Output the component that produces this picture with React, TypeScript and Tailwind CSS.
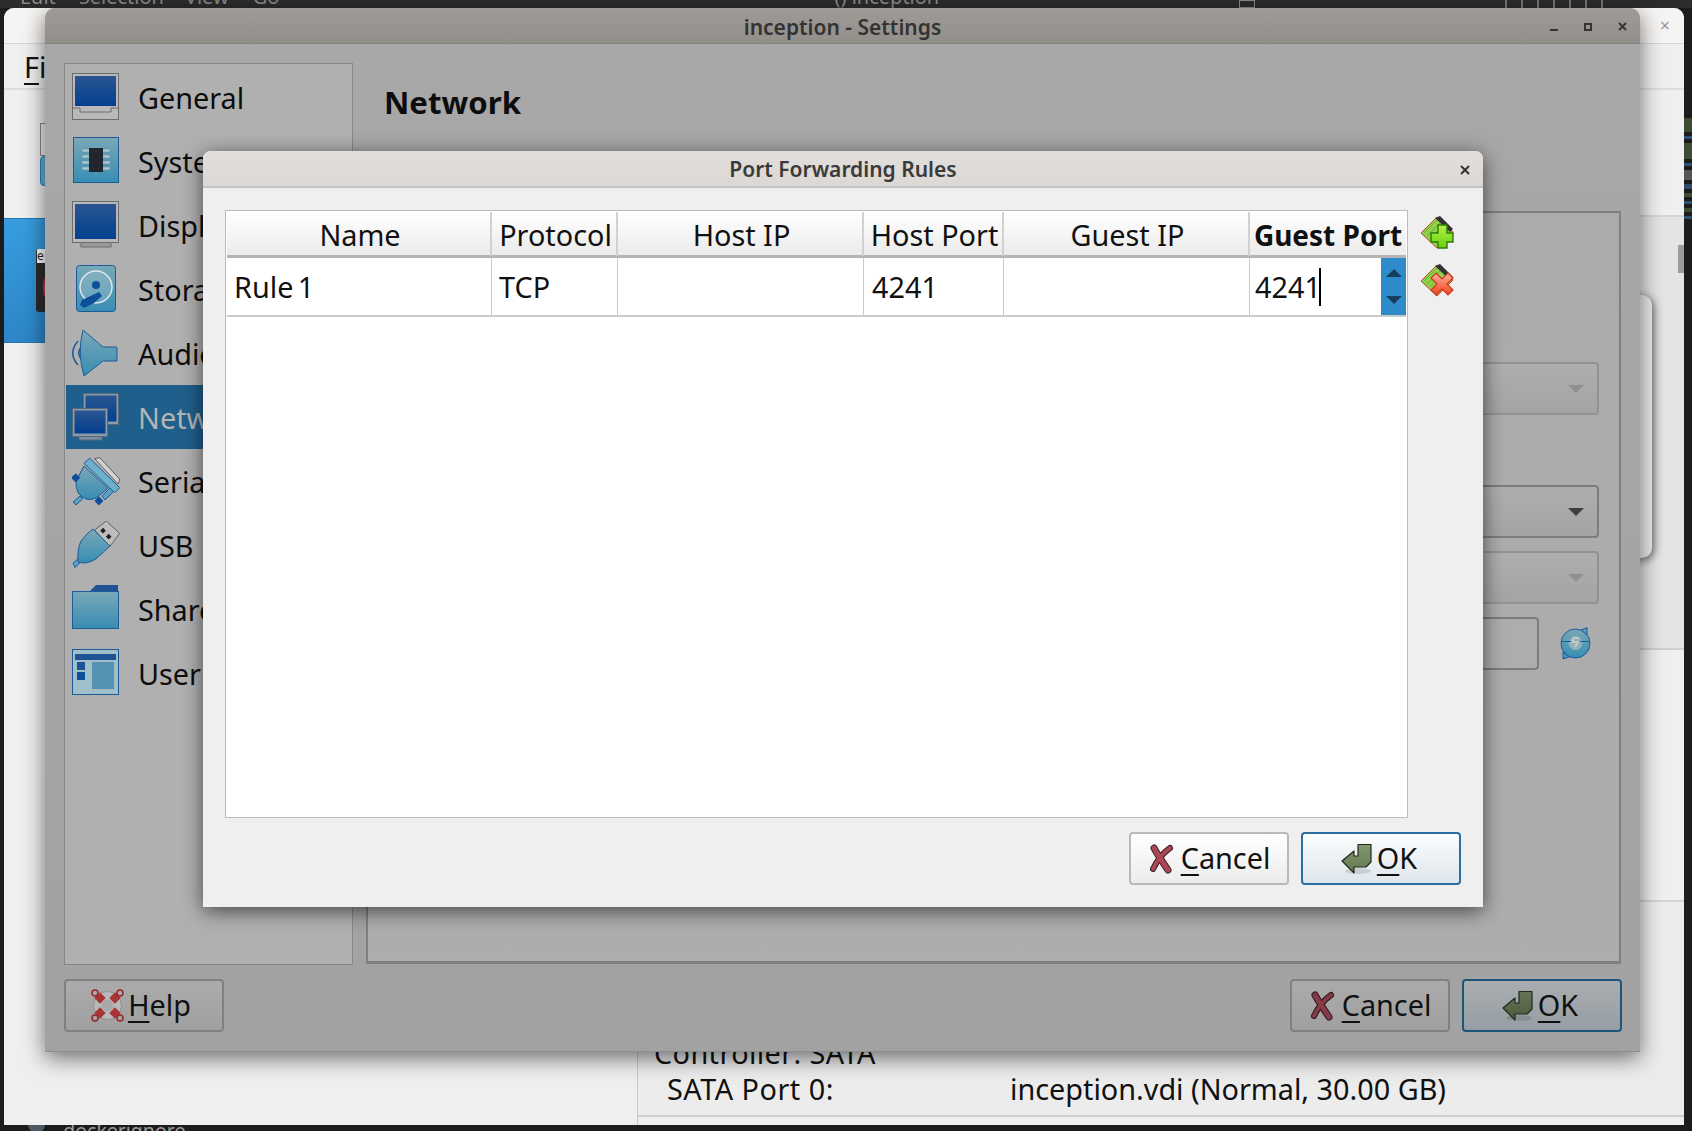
const COLS = "grid grid-cols-[265px_126px_246px_140px_246px_156px]";

const SIDEBAR = ["General", "System", "Display", "Storage", "Audio", "Network", "Serial Ports", "USB", "Shared Folders", "User Interface"];

function Defs() {
  return (
    <svg className="absolute w-0 h-0">
      <defs>
        <linearGradient id="scr" x1="0" y1="0" x2="0" y2="1">
          <stop offset="0" stopColor="#2a5590" />
          <stop offset="1" stopColor="#03408f" />
        </linearGradient>
        <linearGradient id="teal" x1="0" y1="0" x2="0" y2="1">
          <stop offset="0" stopColor="#7aa8b6" />
          <stop offset="1" stopColor="#378db3" />
        </linearGradient>
        <linearGradient id="plus" x1="0" y1="0" x2="0" y2="1">
          <stop offset="0" stopColor="#b4f04a" />
          <stop offset="1" stopColor="#66d20e" />
        </linearGradient>
        <linearGradient id="del" x1="0" y1="0" x2="0" y2="1">
          <stop offset="0" stopColor="#ffb09a" />
          <stop offset="1" stopColor="#f0441c" />
        </linearGradient>
        <linearGradient id="okA" x1="0" y1="0" x2="0" y2="1">
          <stop offset="0" stopColor="#84986f" />
          <stop offset="1" stopColor="#637850" />
        </linearGradient>
        <linearGradient id="okB" x1="0" y1="0" x2="0" y2="1">
          <stop offset="0" stopColor="#667558" />
          <stop offset="1" stopColor="#4c5a3e" />
        </linearGradient>
      </defs>
    </svg>
  );
}

function SideIcon({ name }: { name: string }) {
  const line = "#1c5a9c";
  if (name === "General")
    return (
      <svg width="48" height="48" viewBox="0 0 48 48">
        <rect x="0.5" y="0.5" width="46" height="46" fill="#b9b9b9" stroke="#6c6c6c" />
        <rect x="3" y="3" width="41" height="30" fill="url(#scr)" />
        <path d="M1 35H8V39H39V35H46" fill="none" stroke="#6c6c6c" />
      </svg>
    );
  if (name === "System")
    return (
      <svg width="48" height="48" viewBox="0 0 48 48">
        <rect x="1.5" y="0.5" width="45" height="45" fill="url(#teal)" stroke={line} />
        {[12, 18, 24, 30].map((y) => (
          <rect key={y} x="10" y={y} width="28" height="3" fill="#a9c6cf" stroke="#5b8a9c" strokeWidth="0.5" />
        ))}
        <rect x="17" y="11" width="14" height="24" fill="#22262e" />
      </svg>
    );
  if (name === "Display")
    return (
      <svg width="48" height="48" viewBox="0 0 48 48">
        <path d="M9 41V46H39V41" fill="#9a9a9a" stroke="#6c6c6c" />
        <rect x="0.5" y="0.5" width="46" height="41" fill="#b9b9b9" stroke="#6c6c6c" />
        <rect x="3" y="3" width="41" height="35" fill="url(#scr)" />
      </svg>
    );
  if (name === "Storage")
    return (
      <svg width="48" height="48" viewBox="0 0 48 48">
        <rect x="4.5" y="0.5" width="39" height="46" rx="3" fill="url(#teal)" stroke={line} />
        <circle cx="24" cy="22" r="16" fill="#a8c6d0" fillOpacity="0.35" stroke="#dfe8ea" strokeWidth="1.5" />
        <circle cx="24" cy="20" r="4" fill="#0e4f9c" />
        <path d="M8 40L10 35L27 27L30 31L22 38L12 43Z" fill="#0e4f9c" />
      </svg>
    );
  if (name === "Audio")
    return (
      <svg width="48" height="48" viewBox="0 0 48 48">
        <path d="M6 12C-1 20 -1 28 6 36" fill="none" stroke="#1c5a9c" strokeWidth="1.5" />
        <path d="M9 18C6 22 6 26 9 30" fill="none" stroke="#1c5a9c" strokeWidth="1.5" />
        <path d="M11 1L31 18H44Q45 18 45 19V32H31L12 47Q5 24 11 1Z" fill="url(#teal)" stroke={line} strokeLinejoin="round" />
        <path d="M31 18V32" stroke="#5c93ab" />
      </svg>
    );
  if (name === "Network")
    return (
      <svg width="48" height="48" viewBox="0 0 48 48">
        <rect x="11.5" y="0.5" width="35" height="31" fill="#8a9aa8" stroke="#56687a" />
        <rect x="13.5" y="2.5" width="31" height="26" fill="url(#scr)" />
        <rect x="0.5" y="15.5" width="35" height="28" fill="#8a9aa8" stroke="#56687a" />
        <rect x="2.5" y="17.5" width="31" height="23" fill="url(#scr)" />
        <path d="M7 44V47H30V44" fill="#7b8c9c" stroke="#56687a" />
      </svg>
    );
  if (name === "Serial Ports")
    return (
      <svg width="48" height="48" viewBox="0 0 48 48">
        <path d="M22.7 1.7L27.7 0.7L47.7 22L46 27Z" fill="#d2d2d2" stroke="#5f5f5f" />
        <path d="M1 45L8 39L10.5 42L4 48Z" fill="#5aa3c0" stroke={line} />
        <path d="M12 9L4 24Q3 38 14 42Q22 44 28 38L36 31Z" fill="url(#teal)" stroke={line} />
        <path d="M30 39L40 29L43 33L33 43Z" fill="#5aa3c0" stroke={line} />
        <rect x="0.5" y="17.5" width="6.5" height="6.5" rx="1" fill="#0e4f9c" transform="rotate(45 3.7 20.7)" />
        <rect x="23.5" y="40.5" width="6.5" height="6.5" rx="1" fill="#0e4f9c" transform="rotate(45 26.7 44)" />
        <path d="M17.7 1.3L47.7 30.7L42.7 35.7L12 6.3Z" fill="#6db0ca" stroke={line} strokeLinejoin="round" />
      </svg>
    );
  if (name === "USB")
    return (
      <svg width="48" height="48" viewBox="0 0 48 48">
        <path d="M34.3 0L47.7 12.3L37.7 25.7L22.7 9Z" fill="#bdbdbd" stroke="#5f5f5f" />
        <rect x="29" y="7.7" width="4" height="4" fill="#222" transform="rotate(45 31 9.7)" />
        <rect x="34.7" y="13.7" width="4" height="4" fill="#222" transform="rotate(45 36.7 15.7)" />
        <path d="M1 42L6 38L8.5 41L3 46.7Z" fill="#5aa3c0" stroke={line} />
        <path d="M21 8L38 25L24 38Q14 44 6 41Q5 28 9 20Q14 13 21 8Z" fill="url(#teal)" stroke={line} />
      </svg>
    );
  if (name === "Shared Folders")
    return (
      <svg width="48" height="48" viewBox="0 0 48 48">
        <path d="M18 6L24 0H46V8H18Z" fill="#1f5394" />
        <rect x="0.5" y="6.5" width="46" height="37" fill="url(#teal)" stroke={line} />
      </svg>
    );
  return (
    <svg width="48" height="48" viewBox="0 0 48 48">
      <rect x="0.5" y="0.5" width="46" height="45" fill="#9fbfc9" stroke={line} />
      <rect x="3" y="5" width="41" height="6" fill="#1f5394" />
      <rect x="5" y="13" width="8" height="8" fill="#1f5394" />
      <rect x="5" y="23" width="8" height="8" fill="#0e4f9c" />
      <rect x="20" y="13" width="22" height="27" fill="#5592b2" />
    </svg>
  );
}

function CancelIcon({ dim }: { dim?: boolean }) {
  const fill = dim ? "#863a48" : "#ad4555";
  const edge = dim ? "#2a1a1c" : "#3a2428";
  return (
    <svg width="26" height="30" viewBox="0 0 26 30">
      <path d="M6 4Q11 13 20 26" fill="none" stroke={edge} strokeWidth="7" strokeLinecap="round" />
      <path d="M22 4Q11 12 5 25" fill="none" stroke={edge} strokeWidth="6" strokeLinecap="round" />
      <path d="M6 4Q11 13 20 26" fill="none" stroke={fill} strokeWidth="5" strokeLinecap="round" />
      <path d="M22 4Q11 12 5 25" fill="none" stroke={fill} strokeWidth="4" strokeLinecap="round" />
    </svg>
  );
}

function OkIcon({ dim }: { dim?: boolean }) {
  return (
    <svg width="31" height="32" viewBox="0 0 31 32">
      <ellipse cx="17" cy="28" rx="13" ry="3" fill="#000" fillOpacity="0.12" />
      <path d="M17 1.5H30V19L25 24H13V30L1 18L13 8V13H17Z" fill={dim ? "url(#okB)" : "url(#okA)"} stroke="#1f2a1a" strokeWidth="1.2" strokeLinejoin="round" />
    </svg>
  );
}

function HelpIcon() {
  return (
    <svg width="33" height="33" viewBox="0 0 33 33">
      <circle cx="16.5" cy="16.5" r="14" fill="#b9b9b9" stroke="#8f8f8f" />
      <circle cx="16.5" cy="16.5" r="6" fill="#a8a8a8" />
      {[
        [9, 9, 45],
        [24, 9, -45],
        [9, 24, -45],
        [24, 24, 45],
      ].map(([x, y, r]) => (
        <rect key={`${x}-${y}`} x={x - 4} y={y - 4} width="8" height="8" fill="#a83436" transform={`rotate(${r} ${x} ${y})`} />
      ))}
      {[
        [4, 4],
        [29, 4],
        [4, 29],
        [29, 29],
      ].map(([x, y]) => (
        <circle key={`${x}-${y}`} cx={x} cy={y} r="3" fill="none" stroke="#9a2426" strokeWidth="1.5" />
      ))}
    </svg>
  );
}

function Arrow({ color }: { color: string }) {
  return (
    <svg width="16" height="8" viewBox="0 0 16 8">
      <path d="M0 0H16L8 8Z" fill={color} />
    </svg>
  );
}

function Combo({ arrow, dim }: { arrow: string; dim?: boolean }) {
  return (
    <div className={`h-[53px] flex items-center justify-end pr-[13px] rounded-[4px] border-2 bg-gradient-to-b from-[#aeaeae] to-[#a4a4a4] ${dim ? "border-[#929292]" : "border-[#7c7c7c]"}`}>
      <Arrow color={arrow} />
    </div>
  );
}

function DlgButton({ kind, dim }: { kind: "cancel" | "ok"; dim?: boolean }) {
  const skin =
    kind === "ok"
      ? dim
        ? "pr-[4px] border-[#1d5578] from-[#a9adaf] to-[#969ea4]"
        : "pr-[4px] border-[#2a6f9f] from-[#fbfcfd] to-[#dfe6ec]"
      : dim
        ? "border-[#808080] from-[#ababab] to-[#a0a0a0]"
        : "border-[#b9b9b9] from-[#ffffff] to-[#ececec]";
  return (
    <button className={`w-[160px] h-[53px] flex items-center justify-center gap-[7px] rounded-[4px] border-2 bg-gradient-to-b text-[28.8px] leading-none text-[#111] ${skin}`}>
      {kind === "cancel" ? <CancelIcon dim={dim} /> : <OkIcon dim={dim} />}
      {kind === "cancel" ? (
        <span>
          <span className="underline decoration-2 underline-offset-[5px]">C</span>ancel
        </span>
      ) : (
        <span className="-ml-[2px]">
          <span className="underline decoration-2 underline-offset-[5px]">O</span>K
        </span>
      )}
    </button>
  );
}

function BackWindow() {
  return (
    <div className="flex-1 flex flex-col rounded-t-[10px] overflow-hidden bg-[#efefef] relative">
      <div className="h-[36px] bg-[#f6f4f2] border-b border-[#d8d6d4] shrink-0 flex items-center justify-end pr-[14px]">
        <span className="text-[18px] text-[#999]">×</span>
      </div>
      <div className="h-[46px] border-b-2 border-[#dcdcdc] shrink-0 flex items-center pl-[20px] pt-[2px] text-[28.8px] text-[#111]">
        <span>
          <span className="underline decoration-2 underline-offset-[5px]">F</span>ile
        </span>
      </div>
      <div className="flex-1 flex">
        <div className="w-[634px] shrink-0 border-r border-[#c8c8c8] flex flex-col">
          <div className="h-[128px] pt-[33px] pl-[36px]">
            <div className="w-[30px] h-[33px] border border-[#888] bg-[#eee]" />
            <div className="w-[30px] h-[30px] rounded-[4px] bg-[#5fb4d8] border border-[#2b7fb8]" />
          </div>
          <div className="h-[125px] bg-gradient-to-b from-[#379ddf] to-[#2d86c7] border-y border-[#2a78b0] pt-[30px] pl-[32px]">
            <div className="w-[50px] h-[63px] rounded-[3px] bg-[#2c2c2c] overflow-hidden">
              <div className="w-[14px] h-[14px] ml-[1px] bg-white text-[12px] leading-[14px] text-[#222]">e</div>
              <div className="w-[30px] h-[35px] mt-[7px] ml-[7px] rounded-full bg-[#c23040]" />
            </div>
          </div>
        </div>
        <div className="flex-1 flex flex-col">
          <div className="h-[127px] shrink-0 border-b-2 border-[#d4d4d4]" />
          <div className="h-[433px] shrink-0 border-b-2 border-[#cfcfcf] bg-[#e4e4e4] pt-[78px]">
            <div className="w-[1014px] h-[263px] rounded-r-[10px] bg-[#ececec] shadow-[2px_2px_8px_rgba(0,0,0,0.55)]" />
          </div>
          <div className="h-[252px] shrink-0 border-b-2 border-[#d4d4d4]" />
          <div className="flex-1 pt-[133px] pl-[16px] text-[28.8px] leading-[36px] text-[#111] border-b-2 border-[#cfcfcf] bg-[#ececec]">
            <div className="tracking-[0.4px]">Controller: SATA</div>
            <div className="flex pl-[13px]">
              <span className="w-[343px] tracking-[0.5px]">SATA Port 0:</span>
              <span>inception.vdi (Normal, 30.00 GB)</span>
            </div>
          </div>
          <div className="h-[8px] shrink-0" />
        </div>
      </div>
      <div className="absolute right-0 top-[237px] w-[6px] h-[28px] bg-[#9c9c9c]" />
    </div>
  );
}

function SettingsWindow() {
  return (
    <div className="absolute left-[45px] top-[8px] w-[1595px] h-[1044px] flex flex-col rounded-t-[10px] bg-gradient-to-b from-[#a8a8a8] to-[#a2a2a2] border-b border-[#8c8c8c] shadow-[0_6px_22px_rgba(0,0,0,0.55)]">
      <div className="relative h-[36px] shrink-0 rounded-t-[10px] bg-gradient-to-b from-[#9e9c98] to-[#928e89] border-b border-[#86827e] flex items-center justify-center pt-[4px] text-[21px] font-semibold text-[#333]">
        inception - Settings
        <div className="absolute right-[13px] top-[14px] flex items-center gap-[26px]">
          <div className="w-[8px] h-[2px] mt-[6px] bg-[#333]" />
          <div className="w-[8px] h-[8px] border-2 border-[#333]" />
          <svg width="9" height="9" viewBox="0 0 9 9">
            <path d="M1 1L8 8M8 1L1 8" stroke="#333" strokeWidth="1.8" />
          </svg>
        </div>
      </div>
      <div className="flex pt-[19px] pl-[19px] pr-[19px] gap-[13px] h-[921px] shrink-0">
        <div className="w-[289px] h-[902px] border border-[#878787] bg-[#b0b0b0] p-px">
          {SIDEBAR.map((name) => (
            <div key={name} className={`h-[64px] flex items-center gap-[18px] pl-[6px] text-[28.8px] whitespace-nowrap ${name === "Network" ? "bg-[#1f5f8b] text-[#b4b4b4]" : "text-[#0d0d0d]"}`}>
              <SideIcon name={name} />
              <span className="pt-[2px]">{name}</span>
            </div>
          ))}
        </div>
        <div className="flex-1 flex flex-col">
          <h1 className="h-[148px] pl-[18px] pt-[14px] text-[31.2px] font-bold leading-[50px] text-[#0d0d0d]">Network</h1>
          <div className="h-[753px] border-2 border-b-[3px] border-[#7f7f7f] bg-gradient-to-b from-[#ababab] to-[#adadad] pt-[149px] pr-[20px] pl-[500px]">
            <Combo arrow="#909090" dim />
            <div className="h-[70px]" />
            <Combo arrow="#3d3d3d" />
            <div className="h-[13px]" />
            <Combo arrow="#909090" dim />
            <div className="h-[13px]" />
            <div className="flex items-center">
              <div className="flex-1 h-[53px] rounded-[4px] border-2 border-[#7c7c7c] bg-[#adadad]" />
              <div className="w-[60px] flex justify-end pr-[7px]">
                <svg width="33" height="33" viewBox="0 0 33 33">
                  <circle cx="16.5" cy="16.5" r="14.5" fill="url(#teal)" stroke="#1c5a9c" />
                  <path d="M22 3L28 0.5L28 8Z" fill="#5f9ab6" stroke="#1c5a9c" />
                  <path d="M4 25L10 30L4 32Z" fill="#4a97b9" stroke="#1c5a9c" />
                  <circle cx="16.5" cy="16" r="7" fill="#8fb2bd" />
                  <path d="M2 14.5H31" stroke="#1c5a9c" />
                  <path d="M20 11H15L13 15H19L16 20" fill="none" stroke="#c8c8c8" strokeWidth="2" />
                </svg>
              </div>
            </div>
          </div>
        </div>
      </div>
      <div className="flex-1 flex items-start pt-[14px] pl-[19px] pr-[18px]">
        <button className="w-[160px] h-[53px] flex items-center justify-center gap-[4px] pr-[6px] rounded-[4px] border-2 border-[#808080] bg-gradient-to-b from-[#ababab] to-[#a0a0a0] text-[28.8px] leading-none text-[#111]">
          <HelpIcon />
          <span>
            <span className="underline decoration-2 underline-offset-[5px]">H</span>elp
          </span>
        </button>
        <div className="ml-auto flex gap-[12px]">
          <DlgButton kind="cancel" dim />
          <DlgButton kind="ok" dim />
        </div>
      </div>
    </div>
  );
}

function Stripes() {
  return <path d="M4 17L17 4M7 20L20 7M10 23L21 12M13 26L20 19" stroke="#5cae2a" strokeWidth="0.8" />;
}

function PortDialog() {
  const head = ["Name", "Protocol", "Host IP", "Host Port", "Guest IP", "Guest Port"];
  const cell = "border-r border-[#cbcbcb] flex items-center";
  return (
    <div className="absolute left-[203px] top-[151px] w-[1280px] h-[756px] flex flex-col rounded-t-[8px] bg-[#efefef] shadow-[0_4px_20px_rgba(0,0,0,0.6)]">
      <div className="relative h-[37px] shrink-0 rounded-t-[8px] bg-gradient-to-b from-[#e2dedb] to-[#dcd8d4] border-b-2 border-[#c6c4c2] flex items-center justify-center pt-[3px] text-[21px] font-semibold text-[#3a3a3a]">
        Port Forwarding Rules
        <svg className="absolute right-[13px] top-[14px]" width="10" height="10" viewBox="0 0 10 10">
          <path d="M1 1L9 9M9 1L1 9" stroke="#333" strokeWidth="2" />
        </svg>
      </div>
      <div className="flex pt-[22px] pl-[22px]">
        <div className="w-[1183px] h-[608px] border border-[#bcbcbc] bg-white px-px pt-px text-[28.8px] text-[#111]">
          <div className={`${COLS} h-[46px] border-b-[3px] border-[#b4b4b4] bg-gradient-to-b from-white to-[#ebebeb]`}>
            {head.map((h) => (
              <div key={h} className={`flex items-center justify-center whitespace-nowrap pt-[1px] border-r-2 border-[#d2d2d2] last:border-r-0 ${h === "Guest Port" ? "font-bold text-[28px]" : "pl-[3px]"}`}>
                {h}
              </div>
            ))}
          </div>
          <div className={`${COLS} h-[59px] border-b-2 border-[#cbcbcb]`}>
            <div className={`${cell} pl-[7px]`}>
              <span className="[word-spacing:-3px]">Rule 1</span>
            </div>
            <div className={`${cell} pl-[7px]`}>TCP</div>
            <div className={cell} />
            <div className={`${cell} pl-[8px]`}>4241</div>
            <div className={cell} />
            <div className="flex items-center pl-[5px]">
              <span>4241</span>
              <div className="w-[2px] h-[38px] -ml-[2px] bg-black" />
              <div className="ml-auto h-full w-[25px] bg-[#2e8bc9] flex flex-col items-center justify-center gap-[19px]">
                <svg width="16" height="8" viewBox="0 0 16 8">
                  <path d="M0 8H16L8 0Z" fill="#153e5c" />
                </svg>
                <svg width="16" height="8" viewBox="0 0 16 8">
                  <path d="M0 0H16L8 8Z" fill="#153e5c" />
                </svg>
              </div>
            </div>
          </div>
        </div>
        <div className="ml-[12px] pt-[6px] flex flex-col gap-[15px]">
          <svg width="34" height="33" viewBox="0 0 34 33">
            <path d="M1 17L17 1L33 16L17 32Z" fill="#8fd14a" stroke="#c8451c" strokeWidth="1" />
            <Stripes />
            <path d="M15 2L20 0L33 13L30 16Z" fill="#333" />
            <path d="M18 9H27V17H33V26H27V32H18V26H11V17H18Z" fill="url(#plus)" stroke="#2f7a00" strokeWidth="1.4" />
          </svg>
          <svg width="34" height="33" viewBox="0 0 34 33">
            <path d="M1 17L17 1L33 16L17 32Z" fill="#8fd14a" stroke="#c8451c" strokeWidth="1" />
            <Stripes />
            <path d="M15 2L20 0L33 13L30 16Z" fill="#333" />
            <path d="M16 9L22 15L28 9L33 14L27 20L33 26L28 31L22 25L16 31L11 26L17 20L11 14Z" fill="url(#del)" stroke="#c8381a" strokeWidth="1.2" />
          </svg>
        </div>
      </div>
      <div className="flex justify-end gap-[12px] pr-[22px] pt-[14px]">
        <DlgButton kind="cancel" />
        <DlgButton kind="ok" />
      </div>
    </div>
  );
}

export default function App() {
  return (
    <div className="relative w-[1692px] h-[1131px] overflow-hidden flex flex-col bg-[#1c1c1c] font-['Noto_Sans',sans-serif]">
      <Defs />
      <div className="h-[8px] shrink-0 overflow-hidden bg-[#2c2c2c] text-[20px] leading-[26px] text-[#8a8a8a] flex">
        <div className="-mt-[16px] flex items-start">
          <span className="ml-[20px]">Edit</span>
          <span className="ml-[23px]">Selection</span>
          <span className="ml-[21px]">View</span>
          <span className="ml-[24px]">Go</span>
          <span className="ml-[34px]">···</span>
          <span className="ml-[505px]">() inception</span>
          <div className="ml-[300px] mt-[16px] w-[16px] h-[8px] border border-[#8a8a8a]" />
          <div className="ml-[250px] mt-[16px] flex gap-[14px]">
            {[0, 1, 2, 3, 4, 5, 6].map((i) => (
              <div key={i} className="w-[2px] h-[8px] bg-[#777]" />
            ))}
          </div>
        </div>
      </div>
      <div className="flex-1 flex">
        <div className="w-[4px] shrink-0" />
        <BackWindow />
        <div className="w-[8px] shrink-0 flex flex-col pt-[110px] gap-[4px]">
          {["h-[14px] bg-[#3c4a32]", "h-[3px] bg-[#2e5072]", "h-[16px] bg-[#3e4c34]", "h-[3px] bg-[#2e5072]", "h-[10px] bg-[#555]", "h-[5px] bg-[#304c68]", "h-[4px] bg-[#3c4a32]", "h-[3px] bg-[#2e5072]", "h-[4px] bg-[#3c4a32]", "h-[3px] bg-[#2e5072]"].map((c, i) => (
            <div key={i} className={c} />
          ))}
        </div>
      </div>
      <div className="h-[6px] shrink-0 overflow-hidden flex items-start pl-[28px] gap-[13px] text-[19.5px] leading-[20px] text-[#9a9a9a]">
        <div className="w-[17px] h-[17px] -mt-[9px] rounded-full bg-[#4c5866]" />
        <div className="-mt-[4px]">.dockerignore</div>
      </div>
      <SettingsWindow />
      <PortDialog />
    </div>
  );
}
